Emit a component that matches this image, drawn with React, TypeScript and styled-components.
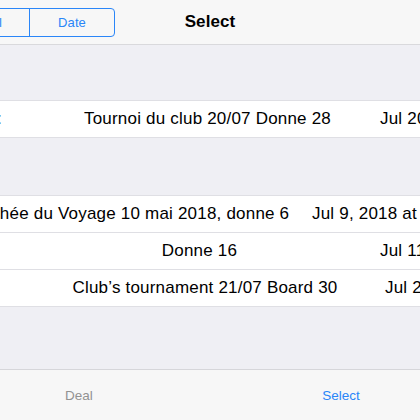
import React from "react";
import styled, { createGlobalStyle } from "styled-components";

const Global = createGlobalStyle`
  html, body { margin: 0; padding: 0; }
  body {
    width: 420px;
    height: 420px;
    overflow: hidden;
    font-family: "Liberation Sans", Arial, sans-serif;
    color: #000;
    -webkit-font-smoothing: antialiased;
  }
  #root { height: 100%; }
`;

const BLUE = "#2a86f8";
const LINE = "#dfdfe4";

const Screen = styled.div`
  height: 420px;
  display: flex;
  flex-direction: column;
  background: #efeff4;
`;

const NavBar = styled.header`
  flex: none;
  height: 44px;
  display: grid;
  grid-template-columns: 1fr auto 1fr;
  align-items: center;
  background: #f7f7f7;
  border-bottom: 1px solid #d9d9dc;
`;

const NavLeft = styled.div`
  display: flex;
  align-items: center;
`;

const Segmented = styled.div`
  display: flex;
  height: 29px;
  margin-left: -57px;
  box-sizing: border-box;
  border: 1px solid ${BLUE};
  border-radius: 4px;
  overflow: hidden;
`;

const Segment = styled.div<{ $divider?: boolean; $pad?: number }>`
  width: 85px;
  box-sizing: border-box;
  padding-left: ${(p) => p.$pad ?? 0}px;
  display: flex;
  align-items: center;
  justify-content: center;
  font-size: 13px;
  letter-spacing: 0.1px;
  color: ${BLUE};
  border-left: ${(p) => (p.$divider ? `1px solid ${BLUE}` : "none")};
`;

const Title = styled.h1`
  margin: 0;
  font-size: 17px;
  font-weight: 700;
  letter-spacing: 0.1px;
`;

const Content = styled.main`
  flex: 1;
  display: flex;
  flex-direction: column;
  padding-top: 55px;
  gap: 57px;
  overflow: hidden;
`;

const Group = styled.section`
  background: #fff;
  border-top: 1px solid ${LINE};
  border-bottom: 1px solid ${LINE};
  display: flex;
  flex-direction: column;
`;

const Row = styled.div<{ $separator?: boolean }>`
  height: 36px;
  overflow: hidden;
  border-top: ${(p) => (p.$separator ? `1px solid ${LINE}` : "none")};
`;

const Track = styled.div`
  height: 100%;
  margin-left: -200px;
  display: flex;
  align-items: center;
  white-space: nowrap;
  font-size: 17px;
  letter-spacing: 0.2px;
`;

const LeadCell = styled.div<{ $w: number; $pad: number }>`
  flex: none;
  width: ${(p) => p.$w}px;
  box-sizing: border-box;
  padding-right: ${(p) => p.$pad}px;
  text-align: right;
  overflow: hidden;
`;

const NameCell = styled.div<{ $w: number }>`
  flex: none;
  width: ${(p) => p.$w}px;
  display: flex;
  justify-content: center;
`;

const DateCell = styled.div<{ $gap: number }>`
  flex: none;
  margin-left: ${(p) => p.$gap}px;
`;

const TabBar = styled.nav`
  flex: none;
  height: 50px;
  background: #f7f7f7;
  border-top: 1px solid #d6d6da;
  display: flex;
  justify-content: space-between;
  align-items: center;
  padding: 0 19px;
`;

const Tab = styled.div<{ $active?: boolean }>`
  width: 120px;
  text-align: center;
  font-size: 13.5px;
  color: ${(p) => (p.$active ? BLUE : "#929292")};
`;

type Deal = {
  lead: string;
  leadW: number;
  leadPad: number;
  name: string;
  nameW: number;
  date: string;
  gap: number;
};

const groups: Deal[][] = [
  [
    {
      lead: "Contrat :",
      leadW: 235,
      leadPad: 33,
      name: "Tournoi du club 20/07 Donne 28",
      nameW: 345,
      date: "Jul 20, 2018 at 10:42 PM",
      gap: 0,
    },
  ],
  [
    {
      lead: "",
      leadW: 150,
      leadPad: 0,
      name: "Trophée du Voyage 10 mai 2018, donne 6",
      nameW: 354,
      date: "Jul 9, 2018 at 4:15 PM",
      gap: 8,
    },
    {
      lead: "",
      leadW: 219,
      leadPad: 0,
      name: "Donne 16",
      nameW: 361,
      date: "Jul 11, 2018 at 9:30 PM",
      gap: 0,
    },
    {
      lead: "",
      leadW: 225,
      leadPad: 0,
      name: "Club’s tournament 21/07 Board 30",
      nameW: 360,
      date: "Jul 21, 2018 at 11:05 PM",
      gap: 0,
    },
  ],
];

export default function App() {
  return (
    <>
      <Global />
      <Screen>
        <NavBar>
          <NavLeft>
            <Segmented>
              <Segment $pad={4}>Deal</Segment>
              <Segment $divider>Date</Segment>
            </Segmented>
          </NavLeft>
          <Title>Select</Title>
          <div />
        </NavBar>
        <Content>
          {groups.map((g, gi) => (
            <Group key={gi}>
              {g.map((d, i) => (
                <Row key={i} $separator={i > 0}>
                  <Track>
                    <LeadCell $w={d.leadW} $pad={d.leadPad}>
                      {d.lead}
                    </LeadCell>
                    <NameCell $w={d.nameW}>{d.name}</NameCell>
                    <DateCell $gap={d.gap}>{d.date}</DateCell>
                  </Track>
                </Row>
              ))}
            </Group>
          ))}
        </Content>
        <TabBar>
          <Tab>Deal</Tab>
          <Tab $active>Select</Tab>
        </TabBar>
      </Screen>
    </>
  );
}
